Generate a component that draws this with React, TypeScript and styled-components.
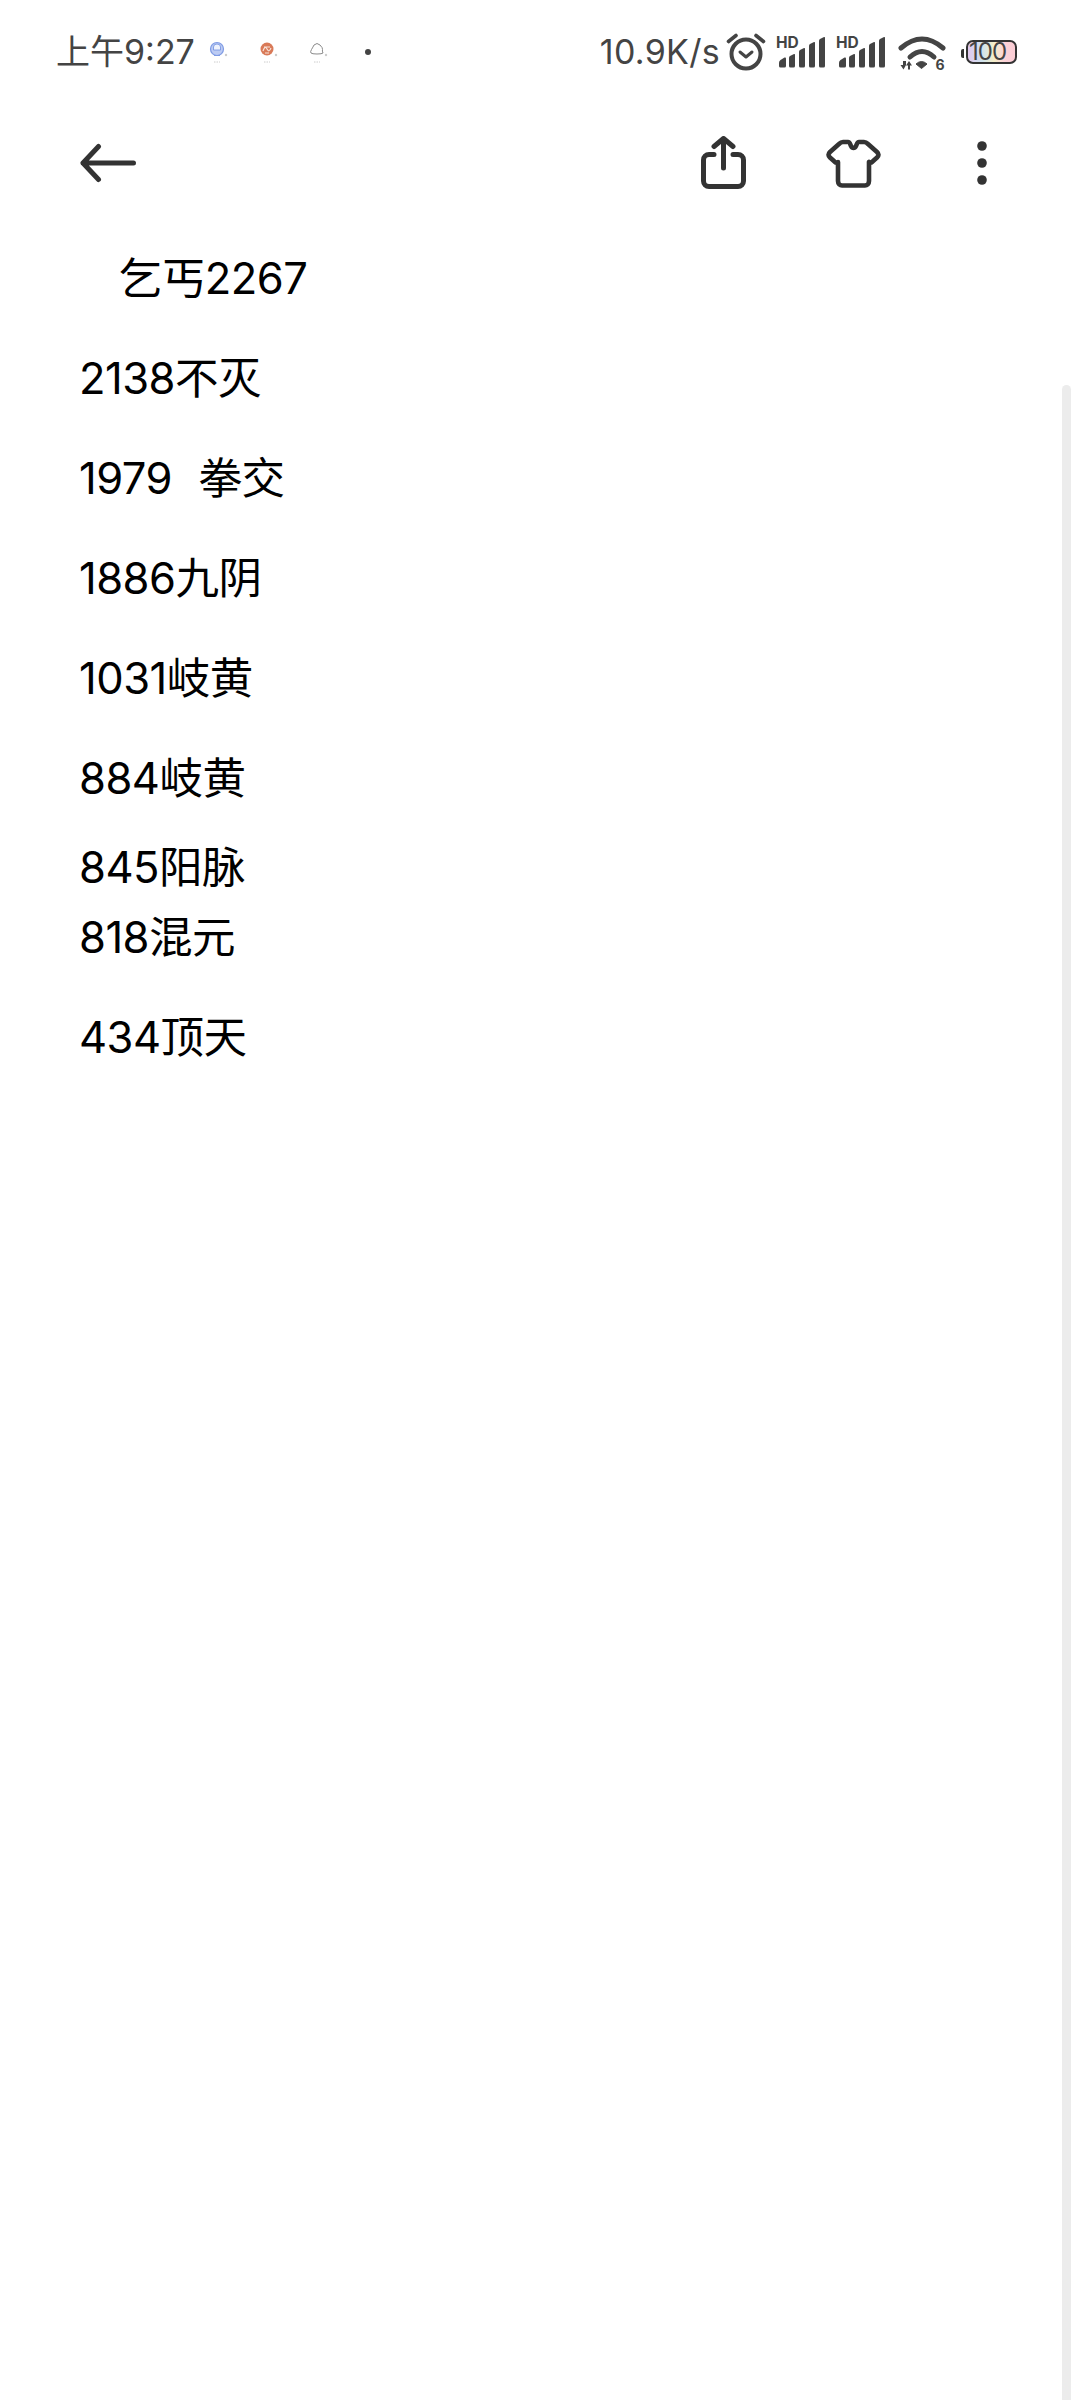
import React from "react";
import styled, { createGlobalStyle } from "styled-components";

const Global = createGlobalStyle`
  html, body { margin: 0; padding: 0; background: #fff; }
  body { font-family: Inter, "Noto Sans CJK SC", sans-serif; }
`;

const Page = styled.div`
  position: relative;
  width: 1080px;
  height: 2400px;
  background: #fff;
  overflow: hidden;
`;

const StatusBar = styled.div`
  display: flex;
  align-items: center;
  justify-content: space-between;
  height: 104px;
  padding: 0 63px 0 56px;
  color: #444;
`;

const StatusGroup = styled.div`
  display: flex;
  align-items: center;
  flex-shrink: 0;
`;

const Clock = styled.span`
  font-size: 34px;
  line-height: 44px;
  width: 137px;
  white-space: nowrap;
`;

const NotifySlot = styled.span`
  display: flex;
  width: 50px;
  justify-content: center;
`;

const Speed = styled.span`
  font-size: 34px;
  line-height: 44px;
  letter-spacing: 0.3px;
  white-space: nowrap;
  margin-right: 6px;
  flex-shrink: 0;
`;

const StatusIcon = styled.svg<{ $gap?: number }>`
  display: block;
  flex-shrink: 0;
  margin-left: ${(p) => p.$gap ?? 0}px;
`;

const Battery = styled.div`
  position: relative;
  display: flex;
  align-items: center;
  width: 51px;
  height: 24px;
  margin-left: 20px;
  padding-left: 1px;
  box-sizing: border-box;
  border: 2px solid #333;
  border-radius: 7px;
  background: linear-gradient(90deg, #e0c8ee 0%, #cfe3ee 30%, #f5efc8 55%, #fcd2d8 78%, #fbccd4 100%);
  color: #444;
  font-size: 24px;
  line-height: 24px;
  letter-spacing: -1px;
  &::before {
    content: "";
    position: absolute;
    left: -7px;
    top: 7px;
    width: 3px;
    height: 9px;
    border-radius: 2px 0 0 2px;
    background: #333;
  }
`;

const Toolbar = styled.div`
  display: flex;
  align-items: center;
  justify-content: space-between;
  height: 118px;
  padding: 0 92px 0 80px;
`;

const ToolGroup = styled.div`
  display: flex;
  align-items: center;
`;

const ToolIcon = styled.svg<{ $gap?: number }>`
  display: block;
  margin-left: ${(p) => p.$gap ?? 0}px;
`;

const Notes = styled.div`
  padding: 21px 0 0 79px;
  color: #000;
  font-size: 43.5px;
  line-height: 70px;
  letter-spacing: -0.5px;
  word-spacing: 1.5px;
  white-space: pre;
`;

const Para = styled.p<{ $gap: number }>`
  margin: 0 0 ${(p) => p.$gap}px;
`;

const ScrollThumb = styled.div`
  position: absolute;
  right: 9px;
  top: 385px;
  bottom: 0;
  width: 9px;
  border-radius: 5px 5px 0 0;
  background: #ececec;
`;

const stroke = "#333";

const Signal = ({ gap }: { gap: number }) => (
  <StatusIcon width="50" height="40" viewBox="0 -4 50 40" $gap={gap}>
    <text x="0" y="12" fontSize="15.5" fontWeight="700" fontFamily="Inter, sans-serif" fill="#444">HD</text>
    <path d="M3 30v-3q0-2 1.500-3l4-2.500q1.500-.5 1.500 1V30q0 1.500-1.500 1.500h-4Q3 31.500 3 30z" fill="#444" />
    <path d="M13 30V21.500q0-1 1-1.500l4-2q1-.5 1 1V30q0 1.500-1.500 1.500h-3Q13 31.500 13 30z" fill="#444" />
    <path d="M23 30V15.500q0-1 1-1.500l4-2q1-.5 1 1V30q0 1.500-1.500 1.500h-3Q23 31.500 23 30z" fill="#444" />
    <path d="M33 30V9.500q0-1 1-1.500l4-2q1-.5 1 1V30q0 1.500-1.500 1.500h-3Q33 31.500 33 30z" fill="#444" />
    <path d="M43 30V4.500q0-1 1-1.500l4-2q1-.5 1 1V30q0 1.500-1.500 1.500h-3Q43 31.500 43 30z" fill="#444" />
  </StatusIcon>
);

const NotifyMark = () => (
  <>
    <circle cx="19" cy="16" r="1.2" fill="#ccc" />
    <path d="M7 23h6" stroke="#ccc" strokeWidth="1" strokeDasharray="1.500 1" />
  </>
);

const lines: [string, number][] = [
  ["   乞丐2267", 30],
  ["2138不灭", 30],
  ["1979  拳交", 30],
  ["1886九阴", 30],
  ["1031岐黄", 30],
  ["884岐黄", 19],
  ["845阳脉", 0],
  ["818混元", 30],
  ["434顶天", 30],
];

export default function App() {
  return (
    <Page>
      <Global />
      <StatusBar>
        <StatusGroup>
          <Clock>上午9:27</Clock>
          <NotifySlot>
            <svg width="22" height="26" viewBox="0 0 22 26">
              <circle cx="10" cy="10" r="6.500" fill="#bccbf3" stroke="#7f9be4" strokeWidth="1.200" />
              <path d="M6.500 8q0-3 3.500-3t3.500 3v3h-7z" fill="#eef2fd" stroke="#6f8fe0" strokeWidth=".8" />
              <path d="M7 16.500h6" stroke="#7f9be4" strokeWidth="1" />
              <NotifyMark />
            </svg>
          </NotifySlot>
          <NotifySlot>
            <svg width="22" height="26" viewBox="0 0 22 26">
              <circle cx="10" cy="10" r="6.500" fill="#d97a58" />
              <path d="M6 12q2-6 4-2t4-1M7 8h6M8 14h4" stroke="#f8e3da" strokeWidth="1.200" fill="none" />
              <NotifyMark />
            </svg>
          </NotifySlot>
          <NotifySlot>
            <svg width="22" height="26" viewBox="0 0 22 26">
              <path d="M4 14q-1-1 .5-3.500T7 6q3-3 6 0t2.500 4.500T16 14q-1 1-6 1t-6-1z" fill="none" stroke="#8a8a8a" strokeWidth="1" />
              <NotifyMark />
            </svg>
          </NotifySlot>
          <NotifySlot>
            <svg width="8" height="8" viewBox="0 0 8 8">
              <circle cx="4" cy="4" r="3" fill="#444" />
            </svg>
          </NotifySlot>
        </StatusGroup>
        <StatusGroup>
          <Speed>10.9K/s</Speed>
          <StatusIcon width="40" height="38" viewBox="0 0 40 38">
            <circle cx="20" cy="21" r="14.500" fill="none" stroke="#444" strokeWidth="4" />
            <path d="M14 19l6 5 6-5" fill="none" stroke="#444" strokeWidth="3" strokeLinecap="round" strokeLinejoin="round" />
            <path d="M2.500 8.500l7.500-6M37.500 8.500l-7.500-6" stroke="#444" strokeWidth="3.600" strokeLinecap="round" />
          </StatusIcon>
          <Signal gap={10} />
          <Signal gap={10} />
          <StatusIcon width="48" height="48" viewBox="0 -7 48 48" $gap={12}>
            <path d="M3 13Q24-5 45 13" fill="none" stroke="#444" strokeWidth="5" strokeLinecap="round" />
            <path d="M12 22Q24 11 36 22" fill="none" stroke="#444" strokeWidth="5" strokeLinecap="round" />
            <path d="M18 29Q23.500 24 29 29L23.500 33.500Z" fill="#444" stroke="#444" strokeWidth="1" strokeLinejoin="round" />
            <path d="M5 26v4H2.500L5.500 34.500 8 30V26zM10 34.500v-4H8L11 26l3 4.500h-2v4z" fill="#444" />
            <text x="37.500" y="34.500" fontSize="14" fontWeight="700" fontFamily="Inter, sans-serif" fill="#444">6</text>
          </StatusIcon>
          <Battery>100</Battery>
        </StatusGroup>
      </StatusBar>
      <Toolbar>
        <svg width="58" height="40" viewBox="0 0 58 40">
          <path d="M3 20H53.500M18.500 3.500L3 20 18.500 36.500" fill="none" stroke={stroke} strokeWidth="5" strokeLinecap="round" strokeLinejoin="round" />
        </svg>
        <ToolGroup>
          <ToolIcon width="45" height="54" viewBox="0 0 45 54">
            <path d="M13 18.500H8a5.500 5.500 0 0 0-5.500 5.500v21a5.500 5.500 0 0 0 5.500 5.500h29a5.500 5.500 0 0 0 5.500-5.500V24a5.500 5.500 0 0 0-5.500-5.500h-5" fill="none" stroke={stroke} strokeWidth="5" strokeLinecap="round" />
            <path d="M22.500 32V3M13 10.500L22.500 2.500 32 10.500" fill="none" stroke={stroke} strokeWidth="5" strokeLinecap="round" strokeLinejoin="round" />
          </ToolIcon>
          <ToolIcon width="57" height="50" viewBox="0 0 57 50" $gap={79}>
            <path d="M18 4H23C25 4 25 6 26 8C27 10 28 10 28.500 10C29 10 30 10 31 8C32 6 32 4 34 4H39C41 4 42 5 43 6L52 14C54 16 54 17.500 52 19.500L47 24C45.500 25.500 44 24 44 24V43C44 46 42 47.500 40 47.500H17C15 47.500 13 46 13 43V24C13 24 11.500 25.500 10 24L5 19.500C3 17.500 3 16 5 14L14 6C15 5 16 4 18 4Z" fill="none" stroke={stroke} strokeWidth="4.600" strokeLinejoin="round" />
          </ToolIcon>
          <ToolIcon width="12" height="46" viewBox="0 0 12 46" $gap={94}>
            <circle cx="6" cy="6" r="4.800" fill={stroke} />
            <circle cx="6" cy="23" r="4.800" fill={stroke} />
            <circle cx="6" cy="40" r="4.800" fill={stroke} />
          </ToolIcon>
        </ToolGroup>
      </Toolbar>
      <Notes>
        {lines.map(([text, gap], i) => (
          <Para key={i} $gap={gap}>{text}</Para>
        ))}
      </Notes>
      <ScrollThumb />
    </Page>
  );
}
